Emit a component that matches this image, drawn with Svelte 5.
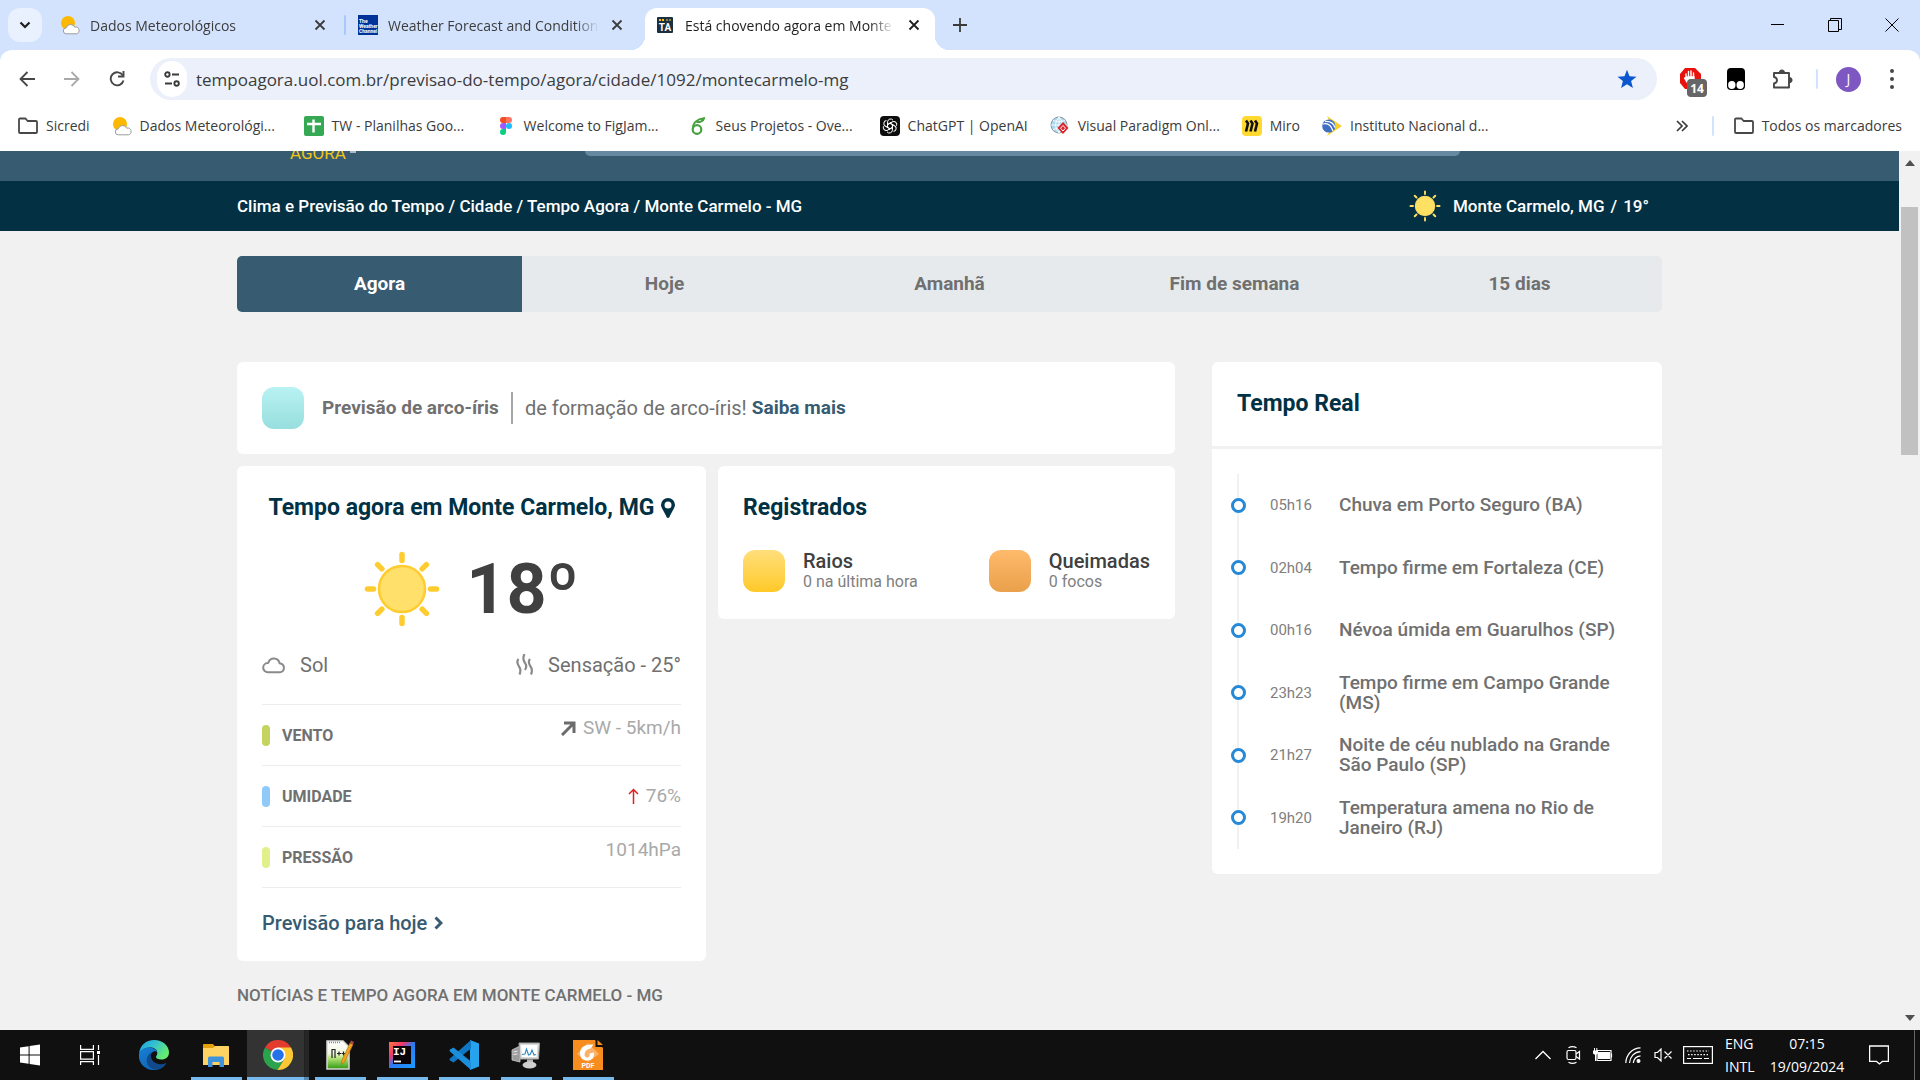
<script>
  const days = ['Agora', 'Hoje', 'Amanhã', 'Fim de semana', '15 dias'];
  const crumbs = ['Clima e Previsão do Tempo', 'Cidade', 'Tempo Agora', 'Monte Carmelo - MG'];

  const bookmarks = [
    { icon: 'folder', label: 'Sicredi' },
    { icon: 'cloudsun', label: 'Dados Meteorológi...', wide: true },
    { icon: 'sheets', label: 'TW - Planilhas Goo...', wide: true },
    { icon: 'figma', label: 'Welcome to FigJam...', wide: true },
    { icon: 'overleaf', label: 'Seus Projetos - Ove...', wide: true },
    { icon: 'openai', label: 'ChatGPT | OpenAI' },
    { icon: 'paradigm', label: 'Visual Paradigm Onl...', wide: true },
    { icon: 'miro', label: 'Miro' },
    { icon: 'inmet', label: 'Instituto Nacional d...', wide: true },
  ];

  const news = [
    { time: '05h16', title: 'Chuva em Porto Seguro (BA)' },
    { time: '02h04', title: 'Tempo firme em Fortaleza (CE)' },
    { time: '00h16', title: 'Névoa úmida em Guarulhos (SP)' },
    { time: '23h23', title: 'Tempo firme em Campo Grande (MS)' },
    { time: '21h27', title: 'Noite de céu nublado na Grande São Paulo (SP)' },
    { time: '19h20', title: 'Temperatura amena no Rio de Janeiro (RJ)' },
  ];

  const apps = [
    { id: 'start', label: 'Iniciar' },
    { id: 'taskview', label: 'Visão de tarefas' },
    { id: 'edge', label: 'Microsoft Edge' },
    { id: 'explorer', label: 'Explorador de Arquivos', open: true },
    { id: 'chrome', label: 'Google Chrome', open: true, active: true },
    { id: 'notepad', label: 'Notepad++', open: true },
    { id: 'intellij', label: 'IntelliJ IDEA', open: true },
    { id: 'vscode', label: 'Visual Studio Code', open: true },
    { id: 'monitor', label: 'Monitor', open: true },
    { id: 'foxit', label: 'Foxit PDF', open: true },
  ];

  let url = $state('tempoagora.uol.com.br/previsao-do-tempo/agora/cidade/1092/montecarmelo-mg');
  let query = $state('');
  const rays = [0, 45, 90, 135, 180, 225, 270, 315];
</script>

{#snippet cross()}
  <svg width="12" height="12" viewBox="0 0 12 12"><path d="M1.5 1.5l9 9M10.5 1.5l-9 9" stroke="currentColor" stroke-width="1.8" /></svg>
{/snippet}

{#snippet glyph(name)}
  {#if name === 'folder'}
    <svg width="20" height="20" viewBox="0 0 20 20"><path d="M1 3.6Q1 2.5 2.1 2.5h5.4L9.6 5h8.3Q19 5 19 6.1v9.8q0 1.1-1.1 1.1H2.1Q1 17 1 15.9z" fill="none" stroke="#474747" stroke-width="1.8" stroke-linejoin="round" /></svg>
  {:else if name === 'cloudsun'}
    <svg width="20" height="20" viewBox="0 0 20 20"><circle cx="8" cy="8" r="7" fill="#fcb900" /><path d="M6.5 18.8a3 3 0 0 1-.3-6 4.6 4.6 0 0 1 8.6-.6 3.4 3.4 0 0 1 1.7 6.6z" fill="#fff" stroke="#9a9a9a" stroke-width="1" /></svg>
  {:else if name === 'sheets'}
    <svg width="20" height="20" viewBox="0 0 20 20"><rect width="20" height="20" rx="2" fill="#34a853" /><path d="M3 8h14M9.5 3.5v13" stroke="#fff" stroke-width="2.4" /></svg>
  {:else if name === 'figma'}
    <svg width="20" height="20" viewBox="0 0 20 20"><path d="M10 1H7a3 3 0 0 0 0 6h3z" fill="#f24e1e" /><path d="M10 1h3a3 3 0 0 1 0 6h-3z" fill="#ff7262" /><path d="M10 7H7a3 3 0 0 0 0 6h3z" fill="#a259ff" /><circle cx="13" cy="10" r="3" fill="#1abcfe" /><path d="M10 13H7a3 3 0 1 0 3 3z" fill="#0acf83" /></svg>
  {:else if name === 'overleaf'}
    <svg width="20" height="20" viewBox="0 0 20 20" fill="none" stroke="#47a141"><circle cx="9" cy="13.5" r="4.3" stroke-width="2.2" /><path d="M5 13C4.5 7 9 3 16 2.2 15.5 5 12 6.5 8.5 6" stroke-width="2" /></svg>
  {:else if name === 'openai'}
    <svg width="20" height="20" viewBox="0 0 20 20"><rect width="20" height="20" rx="4" fill="#0d0d0d" /><g fill="none" stroke="#fff" stroke-width="1">{#each [0, 60, 120, 180, 240, 300] as a}<path transform="rotate({a} 10 10)" d="M7.6 8.6V5.8a3 3 0 0 1 5.4-1.6M7.6 8.6l2.4-1.4 3.6 2" />{/each}</g></svg>
  {:else if name === 'paradigm'}
    <svg width="20" height="20" viewBox="0 0 20 20"><circle cx="9" cy="9" r="8" fill="#a9d8ee" stroke="#8d9aa3" stroke-width="1" /><path d="M1 9h16M9 1v16M3 4.5q6 3 12 0M3 13.5q6-3 12 0M9 1Q2 9 9 17M9 1q7 8 0 16" fill="none" stroke="#fff" stroke-width=".9" /><path d="M13 6l5.5 6-5.5 6-5.5-6z" fill="#d9252b" /><path d="M13 9.5l2.5 2.7L13 15l-2.5-2.8z" fill="none" stroke="#fff" stroke-width="1" /></svg>
  {:else if name === 'miro'}
    <svg width="20" height="20" viewBox="0 0 20 20"><rect width="20" height="20" rx="4" fill="#ffd92f" /><path d="M4 4.5l2 3-2 8M8.5 4.5l2 3-2 8M13 4.5l2 3-2 8" fill="none" stroke="#111" stroke-width="2.6" /></svg>
  {:else if name === 'inmet'}
    <svg width="20" height="20" viewBox="0 0 20 20"><path d="M5 0l15 10L5 20l3-6V6z" fill="#f7d02c" /><circle cx="6.8" cy="10" r="6.6" fill="#3f6fc4" /><path d="M1 8q7-2 10 7M3 5.5q8-.5 10 6" fill="none" stroke="#fff" stroke-width="1.3" /></svg>
  {/if}
{/snippet}

{#snippet app(name)}
  {#if name === 'start'}
    <svg width="20" height="24" viewBox="0 0 20 24" fill="#fff"><path d="M0 4.5L8.6 3.3V11.5H0zM9.6 3.1L20 1.6v9.9H9.6zM0 12.5h8.6v8.2L0 19.5zM9.6 12.5H20v9.9L9.6 20.9z" /></svg>
  {:else if name === 'taskview'}
    <svg width="20" height="20" viewBox="0 0 20 20" fill="none" stroke="#fff" stroke-width="1.2"><path d="M.6 0v4.400h12.800V0M.6 20v-3.400h12.800V20M.6 6.600h12.800v7.600H.6zM18.500 0v5M18.500 10v10" /><path d="M17 6h3v3h-3z" fill="#fff" stroke="none" /></svg>
  {:else if name === 'edge'}
    <svg width="30" height="30" viewBox="0 0 30 30"><defs><linearGradient id="edge-top" x1="0" y1="0" x2="1" y2=".5"><stop offset="0" stop-color="#1b9de2" /><stop offset=".5" stop-color="#35c1d0" /><stop offset="1" stop-color="#66eb6e" /></linearGradient><linearGradient id="edge-low" x1="0" y1="0" x2="1" y2="1"><stop offset="0" stop-color="#1781d8" /><stop offset="1" stop-color="#0c59a4" /></linearGradient></defs><path d="M0 14C1 5 7 0 15 0c9 0 15 6 15 12.500 0 4.500-3.500 7-7.500 7-3.500 0-5.500-1-5.500-2.500 0-1 1.300-1.600 1.300-4C18.300 9.500 15 7.500 11 7.500 5 7.500 1 11 0 14z" fill="url(#edge-top)" /><path d="M0 14c1-4 5-6.500 10-6.500 5 0 8 2.500 8.300 5-1-1.200-3-1.600-4.500-.5C9 15 11 25 20.500 25.500c3 0 5.500-1.500 6.800-2.500C25 27.500 20 30 15 30 6 30-1 23 0 14z" fill="url(#edge-low)" /><path d="M12.500 12.500C5.500 16 5.500 28 17 29.800c5-.6 8.500-3.500 10.300-6.800C19 27 9.500 21 12.500 12.500z" fill="#114a8b" /></svg>
  {:else if name === 'explorer'}
    <svg width="28" height="24" viewBox="0 0 28 24"><path d="M1 2q0-1 1-1h9l2 2.500h14V6H1z" fill="#e3a008" /><path d="M1 5h10l2-2h13q1 0 1 1v18H1z" fill="#ffd264" /><path d="M6 24v-9q0-1.500 1.500-1.500h13Q22 13.500 22 15v9h-4.500v-5h-7v5z" fill="#3f93dc" /></svg>
  {:else if name === 'chrome'}
    <svg width="30" height="30" viewBox="0 0 30 30"><path d="M15 15L2 7.500A15 15 0 0 1 28 7.500z" fill="#e33b2e" /><path d="M15 15L2 7.500A15 15 0 0 0 14.500 30L21.500 18.800z" fill="#2ba24c" /><path d="M15 7.500H28A15 15 0 0 1 14.500 30l7-11.200L20 12z" fill="#fcc934" /><circle cx="15" cy="15" r="7.500" fill="#fff" /><circle cx="15" cy="15" r="5.800" fill="#2372ea" /></svg>
  {:else if name === 'notepad'}
    <svg width="28" height="30" viewBox="0 0 28 30"><defs><linearGradient id="npp" x1="0" y1="0" x2="0" y2="1"><stop offset="0" stop-color="#fff" /><stop offset=".45" stop-color="#f0f7df" /><stop offset=".6" stop-color="#b9e57c" /><stop offset="1" stop-color="#2f9a10" /></linearGradient></defs><path d="M1 1h16l6 6v22H1z" fill="url(#npp)" stroke="#d8d8d8" stroke-width="1.500" /><path d="M3 2.500h12" stroke="#888" stroke-width="1.500" stroke-dasharray="1 1" /><path d="M6 18V9.500h3V18M11 13.500h4M13 11.500v4M15.500 13.500h4M17.500 11.500v4" fill="none" stroke="#222" stroke-width="1.200" /><path d="M24 3l3 1.500L18.500 22l-3 2.500.3-4z" fill="#f0a51c" stroke="#b5701a" stroke-width=".7" /><path d="M24 3l1-2.500 3 1.500-1 2.500z" fill="#b0474a" /></svg>
  {:else if name === 'intellij'}
    <svg width="28" height="28" viewBox="0 0 28 28"><defs><linearGradient id="idea" x1="0" y1="0" x2="1" y2="1"><stop offset="0" stop-color="#fc7a3b" /><stop offset=".3" stop-color="#f0356f" /><stop offset=".5" stop-color="#2a7bf4" /><stop offset="1" stop-color="#1a9cff" /></linearGradient></defs><path d="M1 1h26v26H1z" fill="url(#idea)" /><path d="M5 5h18v18H5z" fill="#0a0308" /><text x="5" y="14" font-size="11" font-family="Liberation Mono" font-weight="bold" fill="#fff">IJ</text><path d="M6 20.500h7" stroke="#fff" stroke-width="1.800" /></svg>
  {:else if name === 'vscode'}
    <svg width="30" height="30" viewBox="0 0 30 30"><path d="M21 0l9 3.500v23L21 30z" fill="#27a3ee" /><path d="M22 0v8.500L4.500 22.500 1 20.500Q0 19.600 1 18.500z" fill="#0f78c4" /><path d="M22 30v-8.500L4.500 7.500 1 9.500Q0 10.400 1 11.500z" fill="#1c8fdc" /></svg>
  {:else if name === 'monitor'}
    <svg width="30" height="28" viewBox="0 0 30 28"><path d="M1 9l8-4v16l-8-2z" fill="#9c9c9c" stroke="#d0d0d0" stroke-width=".8" /><path d="M2.500 11l4-1M2.500 13.500l4-.5" stroke="#eee" /><path d="M8 2h20.500l-1 16H9z" fill="#d9d9d9" stroke="#a0a0a0" /><path d="M10 4h16.500l-1 12H11z" fill="#fff" /><path d="M11 13.500l3-.5 1.500-5 2 6 2-1 1.500-4 2 5 2-.5" fill="none" stroke="#2b86c5" stroke-width="1.100" /><path d="M16 18.500h6v4h-6z" fill="#b7b7b7" /><ellipse cx="18.500" cy="24" rx="7" ry="3.500" fill="#cfcfcf" /></svg>
  {:else if name === 'foxit'}
    <svg width="30" height="30" viewBox="0 0 30 30"><path d="M0 0h22l8 8v22H0z" fill="#f78c1f" /><path d="M22.500 0v7H30z" fill="#101010" /><path d="M24.500 0v5H30z" fill="#f78c1f" /><path d="M15 3l11 11-11 8L4 14z" fill="#fbb168" /><path d="M20.500 4.500C12 4 7 7 7 13.500 7 18 10 20.500 14 20.500c5 0 7.500-3 7-8l-4.500 1c.8 2.500-.5 4-2.300 4-4 0-3.700-8 3.300-9z" fill="#fff" /><text x="15" y="28" font-size="7" font-family="Roboto" font-weight="700" text-anchor="middle" fill="#fff">PDF</text></svg>
  {/if}
{/snippet}

{#snippet sun(size, disc, ray, thick)}
  <svg class="sun" width={size} height={size} viewBox="0 0 76 76" aria-hidden="true">
    <circle cx="38" cy="38" r="23" fill={disc} stroke={ray} stroke-width="2.500" />
    {#each rays as a}
      <path transform="rotate({a} 38 38)" d="M38 3.500v6" stroke={ray} stroke-width={thick} stroke-linecap="round" />
    {/each}
  </svg>
{/snippet}

<div class="screen">
  <header class="browser">
    <div class="tabstrip">
      <button class="tabsearch" aria-label="Pesquisar guias"><svg width="12" height="8" viewBox="0 0 12 8"><path d="M1.500 1.500L6 6l4.500-4.500" fill="none" stroke="#1f1f1f" stroke-width="2.200" /></svg></button>
      <div class="tab">
        {@render glyph('cloudsun')}
        <span class="tabtitle">Dados Meteorológicos</span>
        <button class="close" aria-label="Fechar guia">{@render cross()}</button>
      </div>
      <span class="tabsep"></span>
      <div class="tab second">
        <svg width="20" height="20" viewBox="0 0 20 20" font-family="Roboto" font-size="5" font-weight="700" fill="#fff"><rect width="20" height="20" fill="#003399" /><text x="1" y="8">The</text><text x="1" y="13">Weather</text><text x="1" y="18">Channel</text></svg>
        <span class="tabtitle">Weather Forecast and Condition</span>
        <button class="close" aria-label="Fechar guia">{@render cross()}</button>
      </div>
      <div class="tab active">
        <svg width="16" height="16" viewBox="0 0 16 16"><rect width="16" height="16" rx="1" fill="#1d3041" /><path d="M2 3h6" stroke="#f5c518" stroke-width="2" stroke-dasharray="2 1" /><path d="M9 3h5" stroke="#8a8440" stroke-width="2" stroke-dasharray="2 1" /><text x="8" y="14" font-size="10" font-family="Roboto" font-weight="700" text-anchor="middle" fill="#fff">TA</text></svg>
        <span class="tabtitle">Está chovendo agora em Monte</span>
        <button class="close" aria-label="Fechar guia">{@render cross()}</button>
      </div>
      <button class="newtab" aria-label="Nova guia"><svg width="14" height="14" viewBox="0 0 14 14"><path d="M7 0v14M0 7h14" stroke="#3a3a3a" stroke-width="1.800" /></svg></button>
      <div class="winctl">
        <button aria-label="Minimizar"><svg width="14" height="14" viewBox="0 0 14 14"><path d="M0 6.500h13" stroke="#000" /></svg></button>
        <button aria-label="Restaurar"><svg width="14" height="14" viewBox="0 0 14 14" fill="none" stroke="#000"><path d="M.5 2.500h10v11H.5zM2.500 2.500v-2h11v11h-3" /></svg></button>
        <button aria-label="Fechar"><svg width="14" height="14" viewBox="0 0 14 14"><path d="M.5.5l13 13M13.500.5l-13 13" stroke="#000" /></svg></button>
      </div>
    </div>

    <div class="toolbar">
      <button class="nav" aria-label="Voltar"><svg width="16" height="16" viewBox="0 0 16 16" fill="none" stroke="#474747" stroke-width="1.800"><path d="M16 8H1.500M8.500 1l-7 7 7 7" /></svg></button>
      <button class="nav" aria-label="Avançar"><svg width="16" height="16" viewBox="0 0 16 16" fill="none" stroke="#a9a9a9" stroke-width="1.800"><path d="M0 8h14.500M7.500 1l7 7-7 7" /></svg></button>
      <button class="nav" aria-label="Recarregar"><svg width="16" height="16" viewBox="0 0 16 16" fill="none" stroke="#474747" stroke-width="1.900"><path d="M13.800 4.500A6.500 6.500 0 1 0 14.500 9.500" /><path d="M14.500 0v5.500H9" /></svg></button>
      <div class="omnibox">
        <button class="site" aria-label="Informações do site"><svg width="16" height="16" viewBox="0 0 16 16" fill="none" stroke="#3a3a3a" stroke-width="1.900"><circle cx="3.400" cy="3.500" r="2.200" /><path d="M8 3.500h7M1 12.500h7" /><circle cx="12.600" cy="12.500" r="2.200" /></svg></button>
        <input class="url" aria-label="Endereço" bind:value={url} spellcheck="false" />
        <button class="star" aria-label="Favorito"><svg width="20" height="20" viewBox="0 0 20 20"><path d="M10 .8l2.500 6.500 7 .4-5.400 4.400 1.800 6.900L10 15.200 4.100 19l1.800-6.900L.5 7.700l7-.4z" fill="#0b57d0" /></svg></button>
      </div>
      <div class="exts">
        <button aria-label="Bloqueador"><svg width="29" height="30" viewBox="0 0 29 30"><path d="M6 1h10l6 6v9l-6 6H6l-5-6V7z" fill="#e8120c" /><path d="M7 11V7M9.500 11V4.500M12 11V4M14.500 11V6M7 10h8v5q-4 4-7 0l-2.500-4" fill="#fff" stroke="#fff" stroke-width="1.400" stroke-linecap="round" /><rect x="8" y="12" width="20" height="18" rx="4" fill="#666" /><text x="18" y="25.500" font-size="12" font-family="Open Sans" font-weight="700" text-anchor="middle" fill="#fff">14</text></svg></button>
        <button aria-label="Tampermonkey"><svg width="20" height="22" viewBox="0 0 20 22"><rect x="1" y="0" width="18" height="22" rx="4" fill="#000" /><ellipse cx="5.800" cy="17" rx="3.700" ry="4" fill="#fff" /><ellipse cx="14.200" cy="17" rx="3.700" ry="4" fill="#fff" /></svg></button>
        <button aria-label="Extensões"><svg width="22" height="22" viewBox="0 0 22 22"><path d="M2 5h15v14.500H2v-4q3-.5 3-3.200T2 9z" fill="none" stroke="#474747" stroke-width="1.900" stroke-linejoin="round" /><path d="M7.300 4.500a2.600 2.600 0 0 1 5.200 0zM17.500 9.500a2.600 2.600 0 0 1 0 5.200z" fill="#474747" stroke="#474747" /></svg></button>
        <span class="extsep"></span>
        <button class="avatar" aria-label="Perfil">J</button>
        <button aria-label="Menu"><svg width="6" height="22" viewBox="0 0 6 22" fill="#474747"><circle cx="3" cy="3" r="2" /><circle cx="3" cy="11" r="2" /><circle cx="3" cy="19" r="2" /></svg></button>
      </div>
    </div>

    <nav class="bookmarks" aria-label="Favoritos">
      {#each bookmarks as b}
        <a href="#{b.icon}" class:wide={b.wide}>{@render glyph(b.icon)}<span>{b.label}</span></a>
      {/each}
      <div class="bmright">
        <button aria-label="Mais favoritos"><svg width="12" height="12" viewBox="0 0 12 12"><path d="M1 1l5 5-5 5M6 1l5 5-5 5" fill="none" stroke="#3c3c3c" stroke-width="1.700" /></svg></button>
        <span class="extsep"></span>
        <a href="#todos">{@render glyph('folder')}<span>Todos os marcadores</span></a>
      </div>
    </nav>
  </header>

  <div class="viewport">
    <div class="page">
      <div class="sitehead">
        <div class="wrap">
          <a class="logo" href="#inicio">AGORA<i></i></a>
          <input class="search" type="search" aria-label="Buscar cidade" bind:value={query} />
        </div>
      </div>
      <div class="crumbbar">
        <div class="wrap">
          <nav class="crumbs" aria-label="Trilha">
            {#each crumbs as c, i}{#if i}{' / '}{/if}<a href="#trilha-{i}">{c}</a>{/each}
          </nav>
          <div class="mini">
            {@render sun(32, '#fee063', '#fee063', 4.5)}
            <span>Monte Carmelo, MG</span><span class="slash">/</span><span>19°</span>
          </div>
        </div>
      </div>

      <div class="wrap main">
        <nav class="days" aria-label="Período">
          {#each days as d, i}<a href="#dia-{i}" class:on={i === 0}>{d}</a>{/each}
        </nav>

        <div class="columns">
          <div class="left">
            <section class="card rainbow">
              <span class="swatch aqua"></span>
              <strong>Previsão de arco-íris</strong>
              <span class="bar"></span>
              <p>de formação de arco-íris!</p>
              <a href="#saiba">Saiba mais</a>
            </section>

            <div class="pair">
              <section class="card now">
                <h1>Tempo agora em Monte Carmelo, MG <svg width="14" height="20" viewBox="0 0 14 20"><path fill-rule="evenodd" d="M7 0a7 7 0 0 1 7 7c0 3-4.500 8.500-5.500 12q-1.500 2-3 0C4.500 15.500 0 10 0 7a7 7 0 0 1 7-7zm0 3.500a3.500 3.500 0 1 0 0 7 3.500 3.500 0 0 0 0-7z" fill="#003144" /></svg></h1>
                <div class="temp">
                  {@render sun(76, '#fee06a', '#ffcc30', 5.5)}
                  <span>18º</span>
                </div>
                <div class="cond">
                  <span><svg width="24" height="18" viewBox="0 0 24 18"><path d="M6 16.300a4.600 4.600 0 0 1-.4-9.200 1 1 0 0 0 .9-.8 5.700 5.700 0 0 1 10.900.4q.2.900 1.100.8a4.500 4.500 0 0 1-.3 8.800z" fill="none" stroke="#8a8a8a" stroke-width="2" /></svg>Sol</span>
                  <span class="feel"><svg width="18" height="22" viewBox="0 0 18 22" fill="none" stroke="#8a8a8a" stroke-width="2.200"><path d="M2.500 5q-2.500 3 .5 7.500 2.500 3 .5 8M8.500 0q-2.500 5 .5 9 2.500 3 0 7M14 5q-2.500 3 .5 7.500 2.500 3 .5 8" /></svg>Sensação - 25°</span>
                </div>
                <dl>
                  <div class="row"><dt><i class="wind"></i>VENTO</dt><dd class="up"><svg width="15" height="15" viewBox="0 0 15 15"><path d="M1 14L12 3M3 2h10v10" fill="none" stroke="#6c6c6c" stroke-width="3" /></svg>SW - 5km/h</dd></div>
                  <div class="row"><dt><i class="humid"></i>UMIDADE</dt><dd><svg class="red" width="11" height="16" viewBox="0 0 11 16"><path d="M5.500 16V1.500M1 6l4.500-4.500L10 6" fill="none" stroke="#e02020" stroke-width="1.500" /></svg>76%</dd></div>
                  <div class="row"><dt><i class="press"></i>PRESSÃO</dt><dd class="up">1014hPa</dd></div>
                </dl>
                <a class="more" href="#hoje">Previsão para hoje <svg width="9" height="14" viewBox="0 0 9 14"><path d="M1.500 1.500L7 7l-5.500 5.500" fill="none" stroke="#375b71" stroke-width="3" /></svg></a>
              </section>

              <section class="card reg">
                <h2>Registrados</h2>
                <div class="regrow">
                  <div class="item"><span class="swatch gold"></span><div><strong>Raios</strong><small>0 na última hora</small></div></div>
                  <div class="item"><span class="swatch orange"></span><div><strong>Queimadas</strong><small>0 focos</small></div></div>
                </div>
              </section>
            </div>
          </div>

          <aside class="card live">
            <h2>Tempo Real</h2>
            <ul>
              {#each news as n}
                <li><i></i><time>{n.time}</time><a href="#{n.time}">{n.title}</a></li>
              {/each}
            </ul>
          </aside>
        </div>
        <h3>NOTÍCIAS E TEMPO AGORA EM MONTE CARMELO - MG</h3>
      </div>
    </div>
    <div class="scrollbar">
      <svg width="10" height="6" viewBox="0 0 10 6"><path d="M5 0l5 6H0z" fill="#505050" /></svg>
      <span class="thumb"></span>
      <svg width="10" height="6" viewBox="0 0 10 6"><path d="M0 0h10L5 6z" fill="#505050" /></svg>
    </div>
  </div>

  <footer class="taskbar">
    <div class="apps">
      {#each apps as a}
        <button class:open={a.open} class:active={a.active} class:system={a.id === 'start' || a.id === 'taskview'} aria-label={a.label}>{@render app(a.id)}</button>
      {/each}
    </div>
    <div class="tray">
      <button class="cell" aria-label="Ícones ocultos"><svg width="16" height="10" viewBox="0 0 16 10"><path d="M.5 9L8 1.500 15.500 9" fill="none" stroke="#fff" stroke-width="1.300" /></svg></button>
      <span class="cell"><svg width="15" height="18" viewBox="0 0 15 18" fill="none" stroke="#fff" stroke-width="1.200"><rect x="1" y="4.500" width="9" height="9" rx="1.500" /><path d="M10 8l3.500-2.500v7.500L10 10.500M2.500 1.800Q6.500-.5 10.500 1.800M2.500 16.200q4 2.300 8 0" /></svg></span>
      <span class="cell"><svg width="20" height="14" viewBox="0 0 20 14"><path d="M4 2.500h14v10H4zM18.500 5.500v4" fill="none" stroke="#fff" stroke-width="1.200" /><path d="M5 4h12v7H5zM0 2.500h5v3q-2.500 2.500-5 0z" fill="#fff" /><path d="M1.500 0v3M3.800 0v3M2.500 6v7" stroke="#fff" /></svg></span>
      <span class="cell"><svg width="16" height="16" viewBox="0 0 16 16" fill="none" stroke="#fff" stroke-width="1.200"><path d="M.8 16C1 8 7 1 15.500.8M4.500 16C5 10 9 5 15.500 4.600M8.300 16q.7-6.500 7.200-7.200" /><circle cx="13.500" cy="14" r="1.400" fill="#fff" /></svg></span>
      <span class="cell"><svg width="19" height="14" viewBox="0 0 19 14" fill="none" stroke="#fff" stroke-width="1.200"><path d="M1 4.500h2.500L7 1v12L3.500 9.500H1zM10.500 3.500l7 7M17.500 3.500l-7 7" /></svg></span>
      <span class="cell kb"><svg width="30" height="18" viewBox="0 0 30 18" fill="none" stroke="#fff" stroke-width="1.200"><rect x=".6" y=".6" width="28.800" height="16.800" /><path d="M4 5h22M5 8.700h20" stroke-dasharray="1.500 1.600" /><path d="M4 12.500h4M10 12.500h9M21 12.500h5" /></svg></span>
      <span class="lang">ENG<br />INTL</span>
      <span class="clock">07:15<br />19/09/2024</span>
      <button class="cell note" aria-label="Notificações"><svg width="20" height="20" viewBox="0 0 20 20"><path d="M.6 1h18.800v15.400h-6L10.500 19l-3-2.600H.6z" fill="none" stroke="#fff" stroke-width="1.300" /></svg></button>
      <span class="peek"></span>
    </div>
  </footer>
</div>

<style>
  :global(body) { margin: 0; background: #f1f1f1; }
  * { box-sizing: border-box; }
  button { border: 0; padding: 0; background: none; display: flex; align-items: center; justify-content: center; font: inherit; color: inherit; }
  a { color: inherit; text-decoration: none; }
  svg { display: block; flex: none; }
  h1, h2, h3, p, dl, dd, ul { margin: 0; padding: 0; }
  .screen { height: 100vh; display: flex; flex-direction: column; overflow: hidden; font-family: Roboto, sans-serif; }

  .browser { flex: none; background: #d3e3fd; font: 14px/20px "Open Sans", sans-serif; color: #3c3c3c; }
  .tabstrip { display: flex; height: 50px; padding-left: 8px; }
  .tabsearch { width: 34px; height: 34px; margin: 8px 6px 0 0; border-radius: 12px; background: #e9f1fe; }
  .tab { position: relative; display: flex; align-items: center; width: 296px; height: 42px; margin-top: 8px; padding: 0 12px 8px; gap: 10px; }
  .tabsep { width: 2px; height: 20px; margin-top: 15px; background: #a8c7fa; border-radius: 1px; }
  .tab.second { width: 295px; margin-right: 4px; }
  .tabtitle { flex: 1; min-width: 0; overflow: hidden; white-space: nowrap; padding-top: 1px; mask-image: linear-gradient(90deg, #000 calc(100% - 24px), transparent); }
  .close { width: 24px; height: 24px; margin-left: -4px; }
  .tab.active { width: 290px; padding-right: 9px; background: #fff; border-radius: 12px 12px 0 0; gap: 12px; color: #1f1f1f; }
  .tab.active::before, .tab.active::after { content: ""; position: absolute; bottom: 0; width: 14px; height: 14px; }
  .tab.active::before { right: 100%; background: radial-gradient(circle at 0 0, transparent 14px, #fff 14px); }
  .tab.active::after { left: 100%; background: radial-gradient(circle at 100% 0, transparent 14px, #fff 14px); }
  .newtab { width: 36px; height: 34px; margin: 8px 0 0 7px; }
  .winctl { display: flex; margin-left: auto; }
  .winctl button { width: 57px; height: 50px; }

  .toolbar { display: flex; align-items: center; height: 51px; padding: 7px 10px 0 7px; background: #fff; border-radius: 12px 12px 0 0; }
  .nav { width: 40px; height: 36px; margin-right: 5px; }
  .omnibox { flex: 1; display: flex; align-items: center; height: 42px; margin-left: 8px; padding: 0 20px 0 7px; border-radius: 21px; background: #ebf0fa; }
  .site { width: 30px; height: 36px; border-radius: 15px; background: #fff; flex: none; }
  .url { flex: 1; min-width: 0; margin: 0 0 0 9px; padding: 1px 0 0; border: 0; background: none; outline: 0; font: 17px/24px "Open Sans", sans-serif; color: #3c3c3c; }
  .exts { display: flex; align-items: center; width: 253px; padding-left: 22px; gap: 16px; }
  .exts button:first-child { margin-top: 6px; }
  .exts button:nth-child(3) { margin-left: 10px; }
  .exts button:nth-child(2) { margin-left: 2px; }
  .extsep { width: 2px; height: 20px; background: #d3e3fd; border-radius: 1px; margin-left: 6px; }
  .exts .avatar { width: 25px; height: 25px; margin: 0 12px 0 2px; border-radius: 50%; background: #7e57c2; color: #fff; }
  .bookmarks { display: flex; align-items: center; height: 50px; padding: 0 18px; background: #fff; }
  .bookmarks a { display: flex; align-items: center; gap: 8px; margin-right: 22px; white-space: nowrap; }
  .bookmarks a.wide { width: 192px; margin-right: 0; }
  .bmright { display: flex; align-items: center; margin-left: auto; gap: 20px; }
  .bmright .extsep { margin-left: 4px; }
  .bookmarks .bmright a { margin: 0; }

  .viewport { flex: 1; min-height: 0; display: flex; background: #f1f1f1; }
  .page { flex: 1; min-width: 0; overflow: hidden; }
  .wrap { width: 76%; max-width: 1425px; margin: 0 auto; display: flex; }
  .sitehead { height: 30px; overflow: hidden; background: #375b71; }
  .logo { flex: 0 0 348px; display: flex; gap: 4px; padding-left: 53px; margin-top: -8px; font-size: 17px; line-height: 20px; color: #f0c419; }
  .logo i { width: 6px; height: 2px; margin-top: 8px; background: #a9bac5; }
  .search { flex: 0 1 875px; height: 46px; margin-top: -41px; border: 0; border-radius: 5px; background: #6489a0; }
  .crumbbar { height: 50px; background: #033143; color: #fff; font-size: 17px; font-weight: 500; line-height: 50px; }
  .crumbbar .wrap { justify-content: space-between; }
  .crumbs { white-space: pre; }
  .mini { display: flex; align-items: center; padding-right: 13px; }
  .mini span:first-of-type { margin-left: 12px; }
  .mini .slash { margin: 0 6px; }

  .main { display: block; }
  .days { display: flex; height: 56px; margin-top: 25px; border-radius: 5px; overflow: hidden; background: #e6eaed; color: #707070; font-size: 19px; font-weight: 700; line-height: 56px; text-align: center; }
  .days a { flex: 1; }
  .days .on { background: #375b71; color: #fff; }
  .columns { display: flex; align-items: flex-start; justify-content: space-between; gap: 37px; margin-top: 50px; }
  .left { flex: 938; }
  .card { background: #fff; border-radius: 6px; }
  h1, h2 { font-size: 23px; line-height: 30px; font-weight: 700; color: #003144; }
  .swatch { width: 42px; height: 42px; border-radius: 12px; flex: none; }
  .aqua { background: linear-gradient(#b9f2f2, #97dedf); }
  .gold { background: linear-gradient(#ffdf7b, #ffc929); }
  .orange { background: linear-gradient(#ffba6b, #eaa04b); }
  .rainbow { display: flex; align-items: center; padding: 25px; color: #707070; font-size: 20px; line-height: 24px; }
  .rainbow strong { margin: 0 12px 0 18px; font-size: 19px; font-weight: 700; }
  .rainbow .bar { width: 2px; height: 32px; margin-right: 12px; background: #a5a5a5; }
  .rainbow a { margin-left: 5px; font-size: 19px; font-weight: 700; color: #375b71; }
  .pair { display: grid; grid-template-columns: 469fr 457fr; align-items: start; gap: 12px; margin-top: 12px; }
  .now { padding: 27px 25px 26px; }
  h1 { display: flex; justify-content: center; align-items: center; gap: 6px; white-space: nowrap; }
  .temp { display: flex; align-items: center; justify-content: center; gap: 26px; height: 86px; margin-top: 23px; font-size: 70px; font-weight: 700; color: #404040; }
  .cond { display: flex; justify-content: space-between; margin: 17px 0 23px; font-size: 20px; line-height: 32px; color: #707070; }
  .cond span { display: flex; align-items: center; gap: 14px; }
  dl { border-top: 1px solid #ececec; }
  .row { display: flex; align-items: center; justify-content: space-between; height: 61px; border-bottom: 1px solid #ececec; }
  dt { display: flex; align-items: center; gap: 12px; font-size: 16px; font-weight: 700; color: #707070; }
  dt i { width: 8px; height: 21px; border-radius: 4px; }
  .wind { background: #c5d35f; }
  .humid { background: #90caf9; }
  .press { background: #e2f08b; }
  dd { display: flex; align-items: center; gap: 7px; font-size: 19px; line-height: 22px; color: #a9a9a9; }
  dd.up { align-self: flex-start; margin-top: 12px; }
  .more { display: flex; align-items: center; gap: 7px; margin-top: 23px; font-size: 20px; line-height: 24px; font-weight: 500; color: #375b71; }
  .reg { padding: 27px 25px 27px; }
  .regrow { display: flex; justify-content: space-between; margin-top: 27px; }
  .item { display: flex; gap: 18px; }
  .item strong, .item small { display: block; white-space: nowrap; }
  .item strong { font-size: 20px; line-height: 22px; font-weight: 500; color: #404040; }
  .item small { font-size: 16px; line-height: 20px; color: #808080; }
  .live { flex: 0 0 450px; padding-bottom: 25px; }
  .live h2 { padding: 27px 25px; border-bottom: 3px solid #f1f1f1; }
  .live ul { position: relative; display: grid; grid-auto-rows: 1fr; min-height: 375px; margin: 25px 25px 0 19px; list-style: none; }
  .live ul::before { content: ""; position: absolute; left: 6px; top: 0; bottom: 0; width: 2px; background: #f1f1f1; }
  li { display: grid; grid-template-columns: 15px 45px 1fr; column-gap: 24px; align-items: center; position: relative; }
  li i { width: 15px; height: 15px; border: 3px solid #2589d8; border-radius: 50%; background: #fff; }
  li time { font-size: 15px; color: #808080; }
  li a { max-width: 280px; font-size: 19px; line-height: 20px; font-weight: 500; color: #707070; }
  h3 { margin-top: 23px; font-size: 17px; line-height: 22px; font-weight: 500; color: #707070; }
  .scrollbar { flex: none; width: 21px; display: flex; flex-direction: column; align-items: center; padding: 9px 0; background: #f1f1f1; }
  .thumb { width: 17px; height: 248px; margin: 41px 0 auto; background: #c1c1c1; }

  .taskbar { flex: none; display: flex; justify-content: space-between; height: 50px; background: #101010; color: #fff; font: 14px/23px "Open Sans", sans-serif; }
  .apps { display: flex; }
  .apps button { width: 62px; height: 50px; position: relative; }
  .apps .system { width: 60px; }
  .apps .system + button:not(.system) { margin-left: 3px; }
  .apps .open::after { content: ""; position: absolute; left: 6px; right: 5px; bottom: 0; height: 3px; background: #76b9ed; }
  .apps .active { background: linear-gradient(90deg, #333 57px, #1c1c1c 57px, #262626 58px); }
  .apps .active::after { left: 0; right: 0; background: linear-gradient(90deg, #76b9ed 57px, #5688af 57px); }
  .tray { display: flex; align-items: center; text-align: center; }
  .cell { width: 30px; display: flex; justify-content: center; }
  .kb { width: 40px; }
  .lang { width: 44px; text-align: left; padding-left: 7px; }
  .clock { width: 90px; }
  .note { width: 54px; }
  .peek { width: 1px; height: 50px; margin: 0 5px 0 8px; background: #666; }
</style>
